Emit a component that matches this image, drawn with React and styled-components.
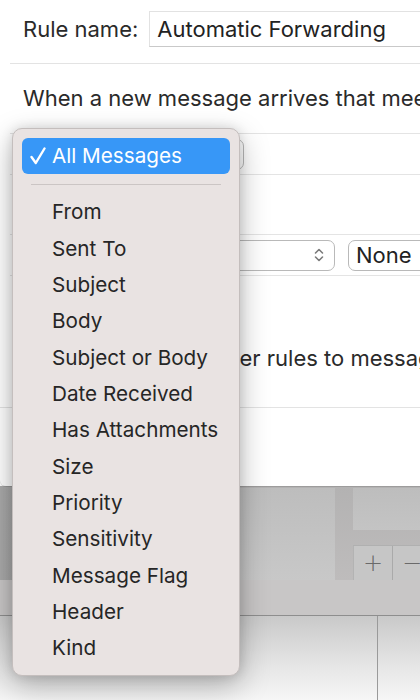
import React from "react";
import styled, { createGlobalStyle } from "styled-components";

const GlobalStyle = createGlobalStyle`
  html, body {
    margin: 0;
    padding: 0;
    background: #ffffff;
    overflow: hidden;
  }
  body {
    font-family: Inter, "Liberation Sans", sans-serif;
    color: #222;
  }
`;

const fields = [
  "From",
  "Sent To",
  "Subject",
  "Body",
  "Subject or Body",
  "Date Received",
  "Has Attachments",
  "Size",
  "Priority",
  "Sensitivity",
  "Message Flag",
  "Header",
  "Kind",
];

export default function App() {
  return (
    <>
      <GlobalStyle />
      <Screen>
        <Sheet>
          <NameRow>
            <Label>Rule name:</Label>
            <NameInput>Automatic Forwarding</NameInput>
          </NameRow>
          <Divider />
          <Prompt>When a new message arrives that meets these conditions:</Prompt>
          <ListRow $top={23}>
            <PopupButton $width={224}>All Messages</PopupButton>
          </ListRow>
          <Prompt $top={18}>Do the following:</Prompt>
          <ListRow $top={17}>
            <PopupButton $width={190} $left={135}>
              Forward
              <Chevrons />
            </PopupButton>
            <PopupButton $width={120} $left={13}>None</PopupButton>
          </ListRow>
          <CheckRow>
            <CheckBox />
            <span>Do not apply other rules to messages that meet these conditions</span>
          </CheckRow>
          <Divider $top={37} $left={0} />
        </Sheet>

        <Backdrop>
          <Upper>
            <Gutter />
            <Panel />
            <SideColumn>
              <SidePanel />
              <ButtonPair>
                <SquareButton>+</SquareButton>
                <SquareButton>−</SquareButton>
              </ButtonPair>
            </SideColumn>
          </Upper>
          <Band />
          <Lower>
            <LowerCell />
            <LowerCell $line />
          </Lower>
        </Backdrop>

        <Menu>
          <SelectedItem>
            <CheckMark viewBox="0 0 16 18" width="16" height="18">
              <path d="M1.5 10 L5.8 16 L14.5 1.5" fill="none" stroke="#fff" strokeWidth="2.4" strokeLinecap="round" strokeLinejoin="round" />
            </CheckMark>
            All Messages
          </SelectedItem>
          <MenuSeparator />
          {fields.map((f) => (
            <MenuItem key={f}>{f}</MenuItem>
          ))}
        </Menu>
      </Screen>
    </>
  );
}

function Chevrons() {
  return (
    <ChevronSvg viewBox="0 0 12 20" width="12" height="20">
      <path d="M2.5 8 L6 4.5 L9.5 8" fill="none" stroke="#7a7a7a" strokeWidth="1.6" strokeLinecap="round" strokeLinejoin="round" />
      <path d="M2.5 12 L6 15.5 L9.5 12" fill="none" stroke="#7a7a7a" strokeWidth="1.6" strokeLinecap="round" strokeLinejoin="round" />
    </ChevronSvg>
  );
}

const Screen = styled.div`
  position: relative;
  width: 420px;
  height: 700px;
  overflow: hidden;
  display: flex;
  flex-direction: column;
  font-size: 22px;
`;

const Sheet = styled.div`
  height: 486px;
  flex: none;
  background: #ffffff;
  border-bottom-left-radius: 6px;
  display: flex;
  flex-direction: column;
  position: relative;
  z-index: 1;
  box-shadow: 0 1px 0 rgba(0, 0, 0, 0.12);
`;

const NameRow = styled.div`
  display: flex;
  align-items: center;
  margin-top: 11px;
  height: 36px;
  padding-left: 23px;
  gap: 11px;
`;

const Label = styled.span`
  color: #2a2a2a;
  white-space: nowrap;
`;

const NameInput = styled.div`
  flex: 1;
  height: 36px;
  box-sizing: border-box;
  border: 1px solid #e2e2e2;
  border-bottom-color: #c9c9c9;
  border-right: none;
  padding-left: 7px;
  display: flex;
  align-items: center;
  white-space: nowrap;
  overflow: hidden;
  color: #222;
`;

const Divider = styled.div`
  margin-top: ${(p) => p.$top ?? 16}px;
  margin-left: ${(p) => p.$left ?? 10}px;
  height: 1px;
  background: #e3e3e3;
`;

const Prompt = styled.div`
  margin-top: ${(p) => p.$top ?? 22}px;
  padding-left: 23px;
  line-height: 24px;
  white-space: nowrap;
  color: #2a2a2a;
`;

const ListRow = styled.div`
  margin-top: ${(p) => p.$top}px;
  margin-left: 10px;
  height: 40px;
  border-top: 1px solid #e4e4e4;
  border-bottom: 1px solid #e4e4e4;
  display: flex;
  align-items: center;
`;

const PopupButton = styled.div`
  position: relative;
  flex: none;
  width: ${(p) => p.$width}px;
  margin-left: ${(p) => p.$left ?? 10}px;
  height: 31px;
  box-sizing: border-box;
  border: 1px solid #b9b9b9;
  border-radius: 7px;
  background: #fff;
  padding-left: 7px;
  display: flex;
  align-items: center;
  white-space: nowrap;
  color: #222;
`;

const ChevronSvg = styled.svg`
  position: absolute;
  right: 9px;
  top: 4px;
`;

const CheckRow = styled.div`
  margin-top: 70px;
  padding-left: 42px;
  display: flex;
  align-items: center;
  gap: 8px;
  line-height: 24px;
  white-space: nowrap;
  color: #2a2a2a;
`;

const CheckBox = styled.div`
  width: 16px;
  height: 16px;
  flex: none;
  border: 1px solid #b5b5b5;
  border-radius: 4px;
`;

const Backdrop = styled.div`
  flex: 1;
  display: flex;
  flex-direction: column;
  background: #bdbbbb;
`;

const Upper = styled.div`
  height: 94px;
  display: grid;
  grid-template-columns: 240px 95px 18px 1fr;
  background: linear-gradient(#b3b2b2, #bebcbc);
`;

const Gutter = styled.div`
  background: linear-gradient(90deg, #a9a9a9, #b5b4b4);
`;

const Panel = styled.div`
  margin-top: 2px;
  background: linear-gradient(#bdbdbd, #c8c8c8);
  grid-column: 2;
`;

const SideColumn = styled.div`
  grid-column: 4;
  display: flex;
  flex-direction: column;
`;

const SidePanel = styled.div`
  margin-top: 2px;
  height: 42px;
  background: linear-gradient(#bdbdbd, #c4c4c4);
`;

const ButtonPair = styled.div`
  margin-top: 15px;
  display: flex;
  height: 34px;
  border-top: 1px solid #b0b0b0;
`;

const SquareButton = styled.div`
  width: 38px;
  flex: none;
  border-right: 1px solid #aaaaaa;
  background: #c6c6c6;
  color: #6a6a6a;
  font-family: "DejaVu Sans", sans-serif;
  font-size: 24px;
  font-weight: 300;
  display: flex;
  align-items: center;
  justify-content: center;
  &:first-child {
    border-left: 1px solid #b3b3b3;
  }
`;

const Band = styled.div`
  height: 35px;
  background: #c8c6c6;
  border-bottom: 1px solid #8e8e8e;
`;

const Lower = styled.div`
  flex: 1;
  display: grid;
  grid-template-columns: 377px 1fr;
  background: linear-gradient(#c9c9c9, #e6e6e6 60%, #f6f6f6);
`;

const LowerCell = styled.div`
  border-left: ${(p) => (p.$line ? "1px solid #9a9a9a" : "none")};
`;

const Menu = styled.div`
  position: absolute;
  left: 12px;
  top: 128px;
  width: 228px;
  height: 548px;
  box-sizing: border-box;
  padding: 9px 9px;
  background: #e9e3e2;
  border: 1px solid #c4bebd;
  border-radius: 10px;
  box-shadow: 0 10px 30px rgba(0, 0, 0, 0.28), 0 0 12px rgba(0, 0, 0, 0.12);
  z-index: 5;
  display: flex;
  flex-direction: column;
  font-size: 20.7px;
`;

const SelectedItem = styled.div`
  position: relative;
  height: 36px;
  border-radius: 6px;
  background: #3797f7;
  color: #fff;
  padding-left: 30px;
  display: flex;
  align-items: center;
  white-space: nowrap;
`;

const CheckMark = styled.svg`
  position: absolute;
  left: 8px;
  top: 9px;
`;

const MenuSeparator = styled.div`
  margin: 10px 9px 9px;
  height: 1px;
  background: #cbc5c4;
`;

const MenuItem = styled.div`
  height: 36.5px;
  padding-left: 30px;
  display: flex;
  align-items: center;
  white-space: nowrap;
  color: #262626;
`;
